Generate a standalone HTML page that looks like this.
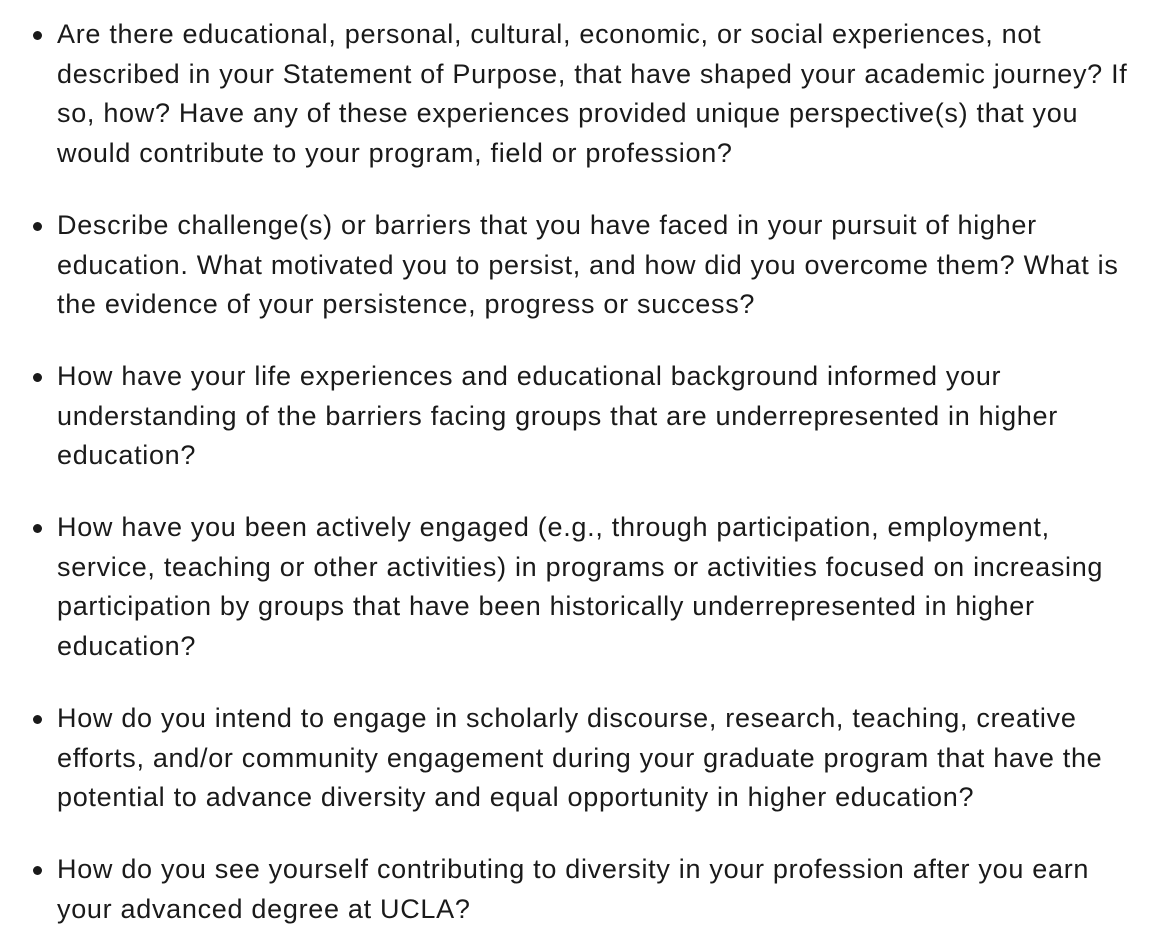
<!DOCTYPE html>
<html><head><meta charset="utf-8"><style>
html,body{margin:0;padding:0;background:#fff;}
body{width:1170px;height:934px;overflow:hidden;font-family:"Liberation Sans",Arial,sans-serif;font-size:27px;letter-spacing:0.7px;line-height:39.7px;color:#1a1a1a;}
ul{margin:0;padding:15px 0 0 57px;list-style:none;}
li{position:relative;margin:0 0 32px 0;width:1110px;white-space:nowrap;}
li:before{content:"";position:absolute;left:-24px;top:16px;width:9px;height:9px;border-radius:50%;background:#1a1a1a;}
</style></head><body>
<ul>
<li>Are there educational, personal, cultural, economic, or social experiences, not<br>described in your Statement of Purpose, that have shaped your academic journey? If<br>so, how? Have any of these experiences provided unique perspective(s) that you<br>would contribute to your program, field or profession?</li>
<li>Describe challenge(s) or barriers that you have faced in your pursuit of higher<br>education. What motivated you to persist, and how did you overcome them? What is<br>the evidence of your persistence, progress or success?</li>
<li>How have your life experiences and educational background informed your<br>understanding of the barriers facing groups that are underrepresented in higher<br>education?</li>
<li>How have you been actively engaged (e.g., through participation, employment,<br>service, teaching or other activities) in programs or activities focused on increasing<br>participation by groups that have been historically underrepresented in higher<br>education?</li>
<li>How do you intend to engage in scholarly discourse, research, teaching, creative<br>efforts, and/or community engagement during your graduate program that have the<br>potential to advance diversity and equal opportunity in higher education?</li>
<li>How do you see yourself contributing to diversity in your profession after you earn<br>your advanced degree at UCLA?</li>
</ul>
</body></html>
